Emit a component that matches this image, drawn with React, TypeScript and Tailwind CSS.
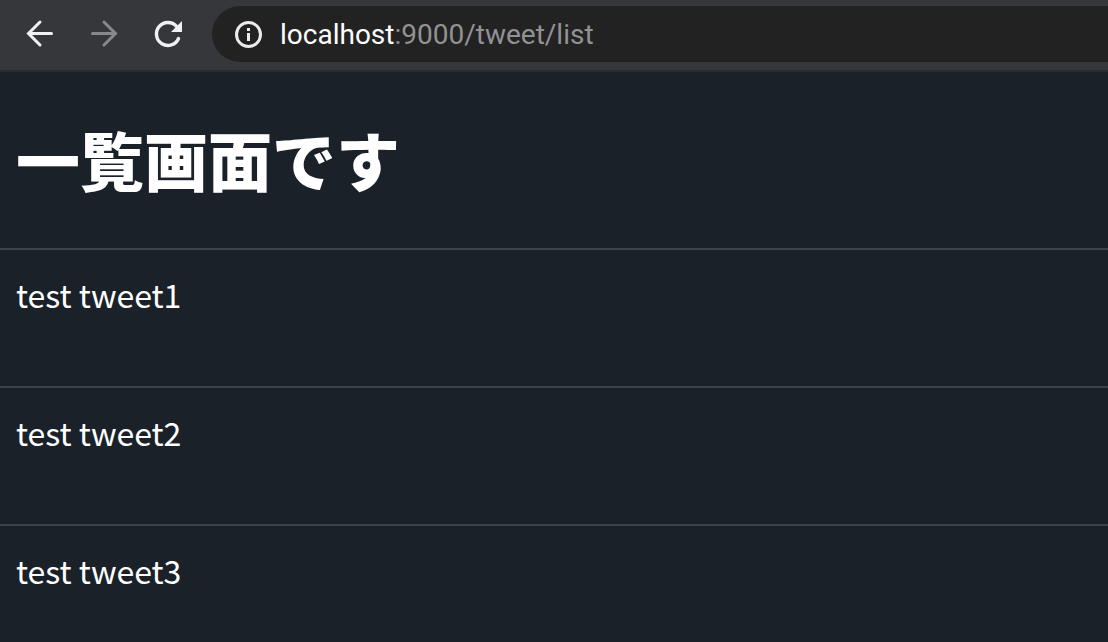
import React from "react";

const tweets = ["test tweet1", "test tweet2", "test tweet3"];

function BrowserBar() {
  return (
    <header className="flex h-[72px] items-start border-b-2 border-[#2a2b2d] bg-[#36373a] pt-[6px] font-[Roboto,sans-serif]">
      <nav className="flex h-14 shrink-0 items-center gap-6 pr-6 pl-5">
        <button type="button" aria-label="Back" className="size-10 text-[#f1f1f4]">
          <svg viewBox="0 0 40 40" fill="none" stroke="currentColor" strokeWidth="3" strokeLinecap="round" className="size-10">
            <path d="M31.500 19.500H9M20 8L8.500 19.500L20 31" />
          </svg>
        </button>
        <button type="button" aria-label="Forward" className="size-10 text-[#87888a]">
          <svg viewBox="0 0 40 40" fill="none" stroke="currentColor" strokeWidth="3" strokeLinecap="round" className="size-10">
            <path d="M8.500 19.500H31M20 8L31.500 19.500L20 31" />
          </svg>
        </button>
        <button type="button" aria-label="Reload" className="size-10 text-[#f1f1f4]">
          <svg viewBox="0 0 40 40" fill="none" stroke="currentColor" strokeWidth="3.400" strokeLinecap="round" className="size-10">
            <path d="M30.500 24.500A11.500 11.500 0 1 1 28.500 12.300" />
            <path d="M34 7V18H23Z" fill="currentColor" stroke="none" />
          </svg>
        </button>
      </nav>
      <div className="flex h-14 min-w-0 flex-1 items-center rounded-l-full bg-[#222223] pl-[22px]">
        <svg viewBox="0 0 28 28" fill="none" stroke="#ebebeb" strokeWidth="3" className="size-7 shrink-0">
          <circle cx="14.500" cy="14.500" r="12" />
          <path d="M14.500 13V21M14.500 8V11" />
        </svg>
        <a href="#list" className="ml-[18px] pt-[2px] text-[28px] leading-8 whitespace-nowrap text-[#929294]">
          <span className="text-white">localhost</span>:9000/tweet/list
        </a>
      </div>
    </header>
  );
}

export default function App() {
  return (
    <div className="min-h-screen overflow-hidden bg-[#1a2129] font-['Noto_Sans_CJK_JP',sans-serif] text-white">
      <BrowserBar />
      <main>
        <h1 className="px-4 pt-[38px] pb-[42px] text-[64px] leading-[96px] font-black">一覧画面です</h1>
        <ul>
          {tweets.map((tweet) => (
            <li key={tweet} className="h-[138px] border-t-2 border-[#3b434b] px-4 pt-5 text-[32px] leading-[48px]">
              {tweet}
            </li>
          ))}
        </ul>
      </main>
    </div>
  );
}
